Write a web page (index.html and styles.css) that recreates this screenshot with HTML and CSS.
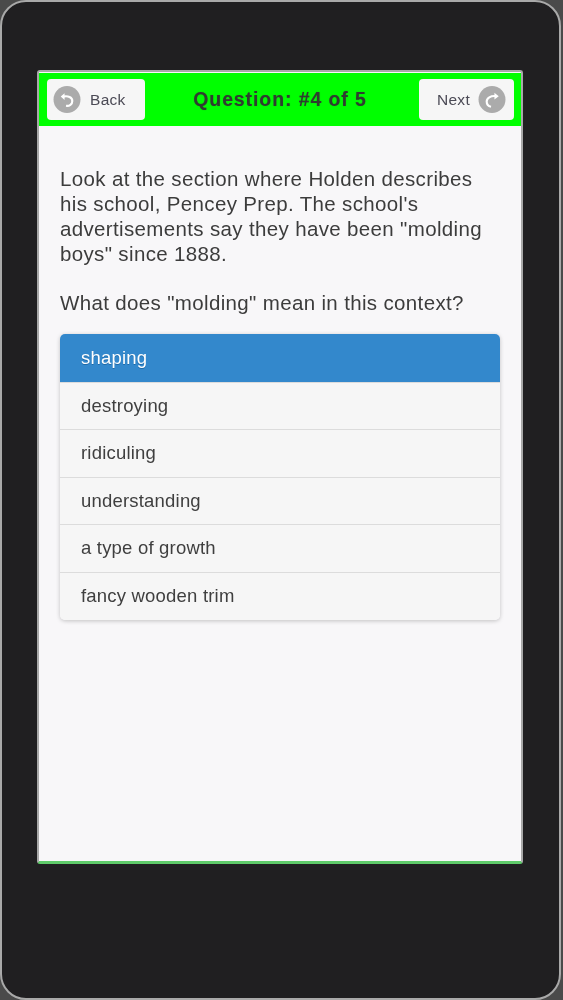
FILE: index.html
```html
<!DOCTYPE html>
<html>
<head>
  <title>Question 4 of 5</title>
  <link rel="stylesheet" href="styles.css">
</head>
<body>
  <div class="phone">
    <div class="screen">
      <div class="header">
        <a class="nav-button">
          <svg class="nav-icon" viewBox="0 0 28 28">
            <circle cx="14" cy="14" r="14" fill="#ababab"/>
            <path d="M11.5 7.5 L7.5 11 L11.5 14.5 Z" fill="#fff"/>
            <path d="M10 11 C15 10 19.5 11.5 19.5 15.5 C19.5 19 16.5 21 13 20.5" fill="none" stroke="#fff" stroke-width="2.2"/>
          </svg>
          <span>Back</span>
        </a>
        <h1>Question: #4 of 5</h1>
        <a class="nav-button next">
          <span>Next</span>
          <svg class="nav-icon" viewBox="0 0 28 28">
            <circle cx="14" cy="14" r="14" fill="#ababab"/>
            <path d="M16.5 7 L21 10.5 L16.5 14 Z" fill="#fff"/>
            <path d="M18 10.5 C12.5 10 8.5 12.5 8.5 16 C8.5 19 10.5 21 13 21.5" fill="none" stroke="#fff" stroke-width="2.2"/>
          </svg>
        </a>
      </div>
      <div class="content">
        <p class="question">Look at the section where Holden describes his school, Pencey Prep. The school's advertisements say they have been "molding boys" since 1888.</p>
        <p class="question prompt">What does "molding" mean in this context?</p>
        <ul class="answers">
          <li class="selected">shaping</li>
          <li>destroying</li>
          <li>ridiculing</li>
          <li>understanding</li>
          <li>a type of growth</li>
          <li>fancy wooden trim</li>
        </ul>
      </div>
    </div>
  </div>
</body>
</html>
```

FILE: styles.css
```css
html, body {
  margin: 0;
  padding: 0;
  background: #4a4a4a;
}
body {
  font-family: "Liberation Sans", Arial, sans-serif;
  width: 563px;
  height: 1000px;
  overflow: hidden;
}
.phone {
  box-sizing: border-box;
  width: 561px;
  height: 1000px;
  padding: 68px 36px 0 35px;
  background: #201f21;
  border: 2px solid #a9a9a9;
  border-radius: 26px;
  filter: blur(0.4px);
}
.screen {
  box-sizing: border-box;
  height: 794px;
  background: #f8f7f9;
  border: 2px solid #a8a8a8;
  border-bottom: 3px solid #5fcb6a;
  border-radius: 3px;
  display: flex;
  flex-direction: column;
}
.header {
  height: 52px;
  flex-shrink: 0;
  margin-top: 1px;
  background: #00ff00;
  display: flex;
  align-items: center;
  justify-content: space-between;
  padding: 0 7px 1px 8px;
}
.header h1 {
  margin: 0 4px 0 0;
  font-size: 19.5px;
  font-weight: bold;
  letter-spacing: 0.9px;
  color: #2f3d30;
  text-shadow: 0 0 1px rgba(47, 61, 48, 0.5);
}
.nav-button {
  box-sizing: border-box;
  width: 98px;
  height: 41px;
  background: #f6f6f6;
  border-radius: 4px;
  display: flex;
  align-items: center;
  gap: 9px;
  padding: 0 8px 0 6px;
  font-size: 15.5px;
  letter-spacing: 0.3px;
  color: #4b4a55;
}
.nav-button span {
  padding-top: 2px;
}
.nav-button.next {
  width: 95px;
  gap: 8px;
  justify-content: flex-end;
}
.nav-icon {
  width: 28px;
  height: 27px;
}
.content {
  padding: 40px 21px 0 21px;
}
.question {
  margin: 0 0 24px;
  font-size: 20.5px;
  line-height: 25px;
  letter-spacing: 0.35px;
  color: #3c3c3c;
}
.question.prompt {
  margin-bottom: 19px;
}
.answers {
  list-style: none;
  margin: 0;
  padding: 0;
  width: 440px;
  border-radius: 5px;
  box-shadow: 0 1px 4px rgba(0, 0, 0, 0.22);
  overflow: hidden;
}
.answers li {
  box-sizing: border-box;
  height: 47.6px;
  line-height: 46px;
  padding-left: 21px;
  font-size: 18.5px;
  letter-spacing: 0.2px;
  color: #3f3f3f;
  background: #f6f6f6;
  border-top: 1px solid #dcdcdc;
}
.answers li.selected {
  background: #3388cc;
  border-top: 0;
  line-height: 48px;
  color: #fff;
  text-shadow: 0 1px 0 #1f6aa8;
}
```
